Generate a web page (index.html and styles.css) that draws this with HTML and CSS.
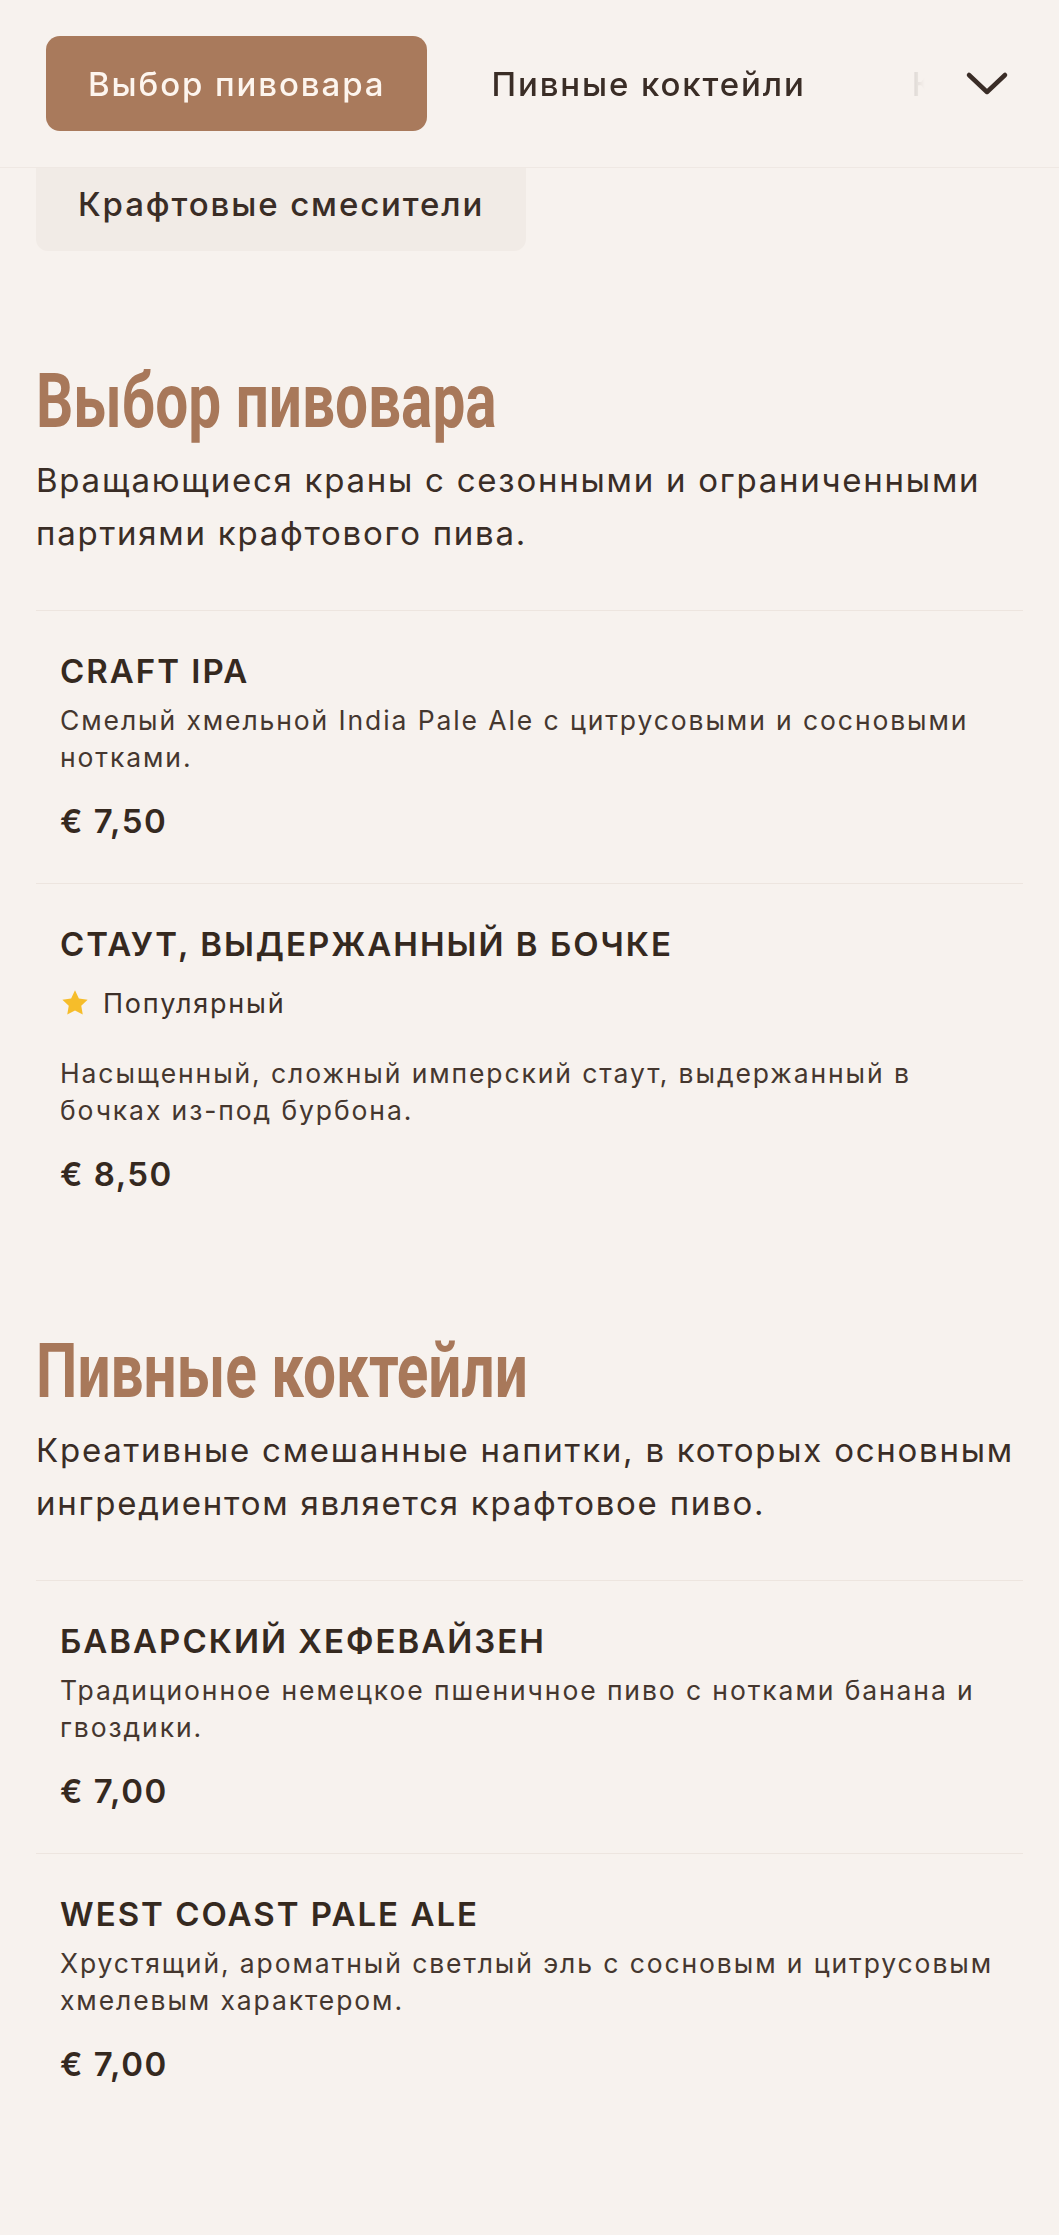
FILE: index.html
```html
<!DOCTYPE html>
<html lang="ru">
<head>
<meta charset="utf-8">
<title>Меню</title>
<link rel="stylesheet" href="styles.css">
</head>
<body>
<header class="topbar">
  <nav class="tabs">
    <a class="tab tab-active">Выбор пивовара</a>
    <a class="tab">Пивные коктейли</a>
    <a class="tab">Крафтовые смесители</a>
  </nav>
  <button class="more" aria-label="Ещё">
    <svg width="44" height="26" viewBox="0 0 44 26"><path d="M4 4 L22 21 L40 4" fill="none" stroke="#3a2d27" stroke-width="4.5" stroke-linecap="round" stroke-linejoin="round"/></svg>
  </button>
</header>
<div class="overflow-tabs">
  <a class="tab tab-muted">Крафтовые смесители</a>
</div>
<main class="menu">
  <section class="category">
    <h2 class="category-title"><span>Выбор пивовара</span></h2>
    <p class="category-desc">Вращающиеся краны с сезонными и ограниченными партиями крафтового пива.</p>
    <ul class="items">
      <li class="item">
        <h3 class="item-name">Craft IPA</h3>
        <p class="item-desc">Смелый хмельной India Pale Ale с цитрусовыми и сосновыми нотками.</p>
        <p class="item-price">€ 7,50</p>
      </li>
      <li class="item">
        <h3 class="item-name">Стаут, выдержанный в бочке</h3>
        <div class="badge">
          <svg class="star" width="30" height="30" viewBox="0 0 24 24"><path d="M12 1.8l3.1 6.5 7 1-5.1 4.9 1.2 7L12 17.9l-6.2 3.3 1.2-7-5.1-4.9 7-1z" fill="#f6bd2a"/></svg>
          <span>Популярный</span>
        </div>
        <p class="item-desc">Насыщенный, сложный имперский стаут, выдержанный в бочках из-под бурбона.</p>
        <p class="item-price">€ 8,50</p>
      </li>
    </ul>
  </section>
  <section class="category">
    <h2 class="category-title"><span>Пивные коктейли</span></h2>
    <p class="category-desc">Креативные смешанные напитки, в которых основным ингредиентом является крафтовое пиво.</p>
    <ul class="items">
      <li class="item">
        <h3 class="item-name">Баварский хефевайзен</h3>
        <p class="item-desc">Традиционное немецкое пшеничное пиво с нотками банана и гвоздики.</p>
        <p class="item-price">€ 7,00</p>
      </li>
      <li class="item">
        <h3 class="item-name">West Coast Pale Ale</h3>
        <p class="item-desc">Хрустящий, ароматный светлый эль с сосновым и цитрусовым хмелевым характером.</p>
        <p class="item-price">€ 7,00</p>
      </li>
    </ul>
  </section>
</main>
</body>
</html>
```
FILE: styles.css
```css
* { box-sizing: border-box; }

html, body {
  margin: 0;
  padding: 0;
  background: #f7f2ee;
}

body {
  font-family: Inter, "Noto Sans", "Liberation Sans", sans-serif;
  color: #3a2d26;
  min-height: 2235px;
}

.topbar {
  position: relative;
  z-index: 2;
  display: flex;
  align-items: center;
  height: 168px;
  padding: 0 32px 0 46px;
  background: #f7f2ee;
  border-bottom: 1px solid #efe8e3;
}

.tabs {
  flex: 1;
  min-width: 0;
  display: flex;
  gap: 22px;
  overflow: hidden;
  -webkit-mask-image: linear-gradient(to right, #000 calc(100% - 130px), rgba(0, 0, 0, 0.2) calc(100% - 40px), transparent calc(100% - 22px));
  mask-image: linear-gradient(to right, #000 calc(100% - 130px), rgba(0, 0, 0, 0.2) calc(100% - 40px), transparent calc(100% - 22px));
}

.tab {
  flex: none;
  display: flex;
  align-items: center;
  height: 95px;
  padding: 0 42px;
  border-radius: 14px;
  font-size: 33px;
  font-weight: 500;
  letter-spacing: 1.9px;
  color: #3a2d26;
  white-space: nowrap;
}

.tab-active {
  background: #a97a5c;
  color: #fdf5ee;
}

.tab-muted {
  background: #f1ebe6;
  border-radius: 12px;
}

.more {
  flex: none;
  width: 80px;
  height: 80px;
  display: flex;
  align-items: center;
  justify-content: center;
  padding: 0;
  border: 0;
  background: transparent;
}

.overflow-tabs {
  position: relative;
  z-index: 1;
  display: flex;
  margin-top: -12px;
  padding: 0 36px;
}

.menu {
  padding: 0 36px;
}

.category {
  margin-top: 95.5px;
}

.category:first-child {
  margin-top: 110px;
}

.category-title {
  margin: 0 0 12.5px;
  font-family: Roboto, "Liberation Sans", sans-serif;
  font-weight: 700;
  font-size: 76px;
  line-height: 80px;
  color: #a8785a;
  white-space: nowrap;
}

.category-title span {
  display: inline-block;
  transform: scaleX(0.77);
  transform-origin: left center;
}

.category-desc {
  margin: 0 0 50px;
  font-size: 33px;
  line-height: 53px;
  letter-spacing: 1.75px;
  color: #3a2d26;
}

.items {
  list-style: none;
  margin: 0;
  padding: 0;
}

.item {
  border-top: 1px solid #ede5df;
  padding: 37px 24px 39px;
}

.item-name {
  margin: 0 0 8px;
  font-size: 33px;
  line-height: 46px;
  font-weight: 600;
  letter-spacing: 2px;
  text-transform: uppercase;
  color: #35291f;
}

.badge {
  display: flex;
  align-items: center;
  gap: 13px;
  height: 37px;
  margin: 18px 0 33px;
  font-size: 27px;
  letter-spacing: 1.8px;
  color: #3d3029;
}

.star {
  flex: none;
}

.item-desc {
  margin: 0;
  font-size: 26.5px;
  line-height: 37px;
  letter-spacing: 1.9px;
  color: #45372f;
}

.item-price {
  margin: 22px 0 0;
  font-size: 33px;
  line-height: 46px;
  font-weight: 600;
  letter-spacing: 1.5px;
  color: #35291f;
}
```
